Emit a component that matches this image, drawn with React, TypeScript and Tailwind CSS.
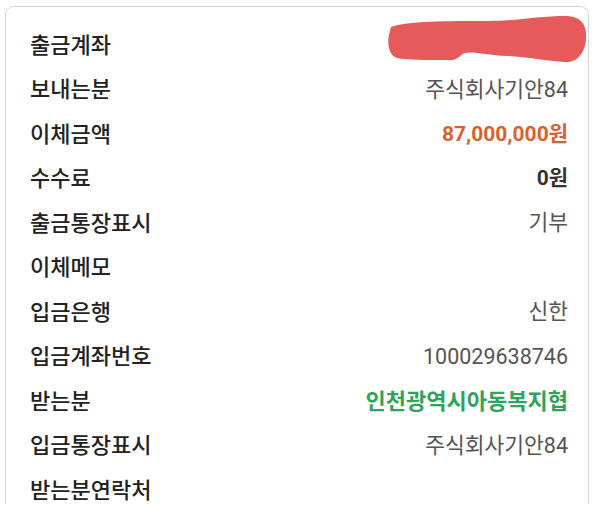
const rows: { label: string; value?: string; tone?: 'amount' | 'bold' | 'green' | 'masked' }[] = [
  { label: '출금계좌', tone: 'masked' },
  { label: '보내는분', value: '주식회사기안84' },
  { label: '이체금액', value: '87,000,000원', tone: 'amount' },
  { label: '수수료', value: '0원', tone: 'bold' },
  { label: '출금통장표시', value: '기부' },
  { label: '이체메모' },
  { label: '입금은행', value: '신한' },
  { label: '입금계좌번호', value: '100029638746' },
  { label: '받는분', value: '인천광역시아동복지협', tone: 'green' },
  { label: '입금통장표시', value: '주식회사기안84' },
  { label: '받는분연락처' },
];

function Masked() {
  return (
    <svg width="200" height="52" viewBox="0 0 200 52" className="-mr-[19px] -mt-[12px]">
      <path
        d="M 4 14 C 20 8, 60 8, 100 8 C 130 8, 150 3, 180 3 C 196 4, 200 14, 199 26 C 198 40, 190 50, 178 49 C 160 48, 140 44, 120 43 C 100 42, 85 38, 78 40 C 72 42, 72 48, 60 47 C 40 47, 20 47, 10 45 C 2 43, 0 30, 2 22 Z"
        fill="#e65a5c"
      />
    </svg>
  );
}

export default function App() {
  return (
    <div className="w-[600px] h-[520px] bg-white pt-[6px] pl-[5px] font-['Roboto','Noto_Sans_CJK_KR',sans-serif]">
      {/* Card */}
      <div className="w-[584px] h-[498px] rounded-t-[9px] border border-b-0 border-[#d4d4d4] pt-[16px] pl-[24px] pr-[20px] overflow-hidden">
        {rows.map((r) => (
          <div key={r.label} className="h-[44.5px] flex items-center justify-between">
            <span className="text-[22px] font-medium text-[#222]">{r.label}</span>
            {r.tone === 'masked' ? (
              <Masked />
            ) : r.value ? (
              <span
                className={
                  r.tone === 'amount'
                    ? 'text-[21px] font-bold text-[#d8612f]'
                    : r.tone === 'bold'
                      ? 'text-[21px] font-bold text-[#333]'
                      : r.tone === 'green'
                        ? 'text-[22px] font-semibold text-[#2ea35c]'
                        : 'text-[21.5px] text-[#555]'
                }
              >
                {r.value}
              </span>
            ) : null}
          </div>
        ))}
      </div>
    </div>
  );
}
